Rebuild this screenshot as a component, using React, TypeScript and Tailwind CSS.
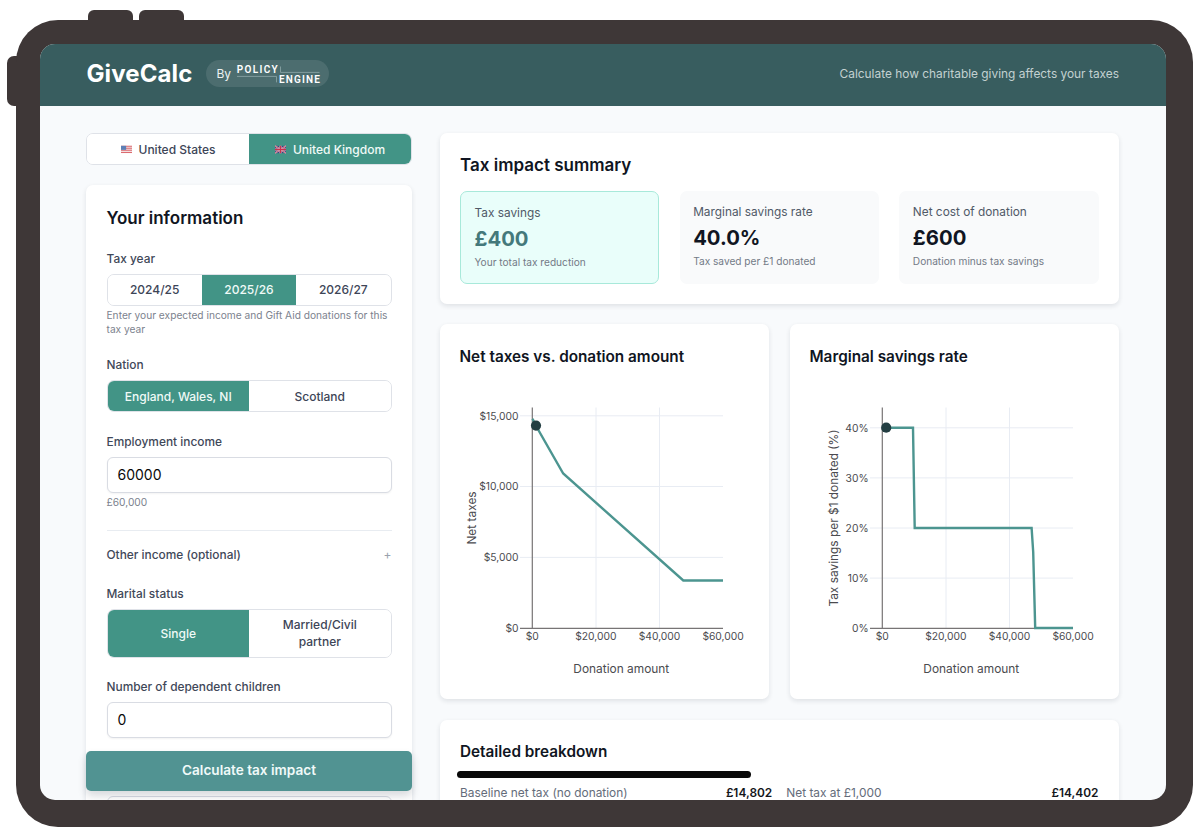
import { ReactNode } from 'react';
import clsx from 'clsx';

const X_TICKS = ['$0', '$20,000', '$40,000', '$60,000'];

type Tick = { label: string; y: number };

const TAX_TICKS: Tick[] = [
  { label: '$15,000', y: 35.8 },
  { label: '$10,000', y: 106.5 },
  { label: '$5,000', y: 177.4 },
  { label: '$0', y: 248.3 },
];

const RATE_TICKS: Tick[] = [
  { label: '40%', y: 47.8 },
  { label: '30%', y: 97.9 },
  { label: '20%', y: 148 },
  { label: '10%', y: 198.1 },
  { label: '0%', y: 248.3 },
];

function UsFlag() {
  return (
    <svg width="11" height="9" viewBox="0 0 12 9">
      <rect y="0.5" width="12" height="8" fill="#f3dfe0" />
      <path d="M0 1h12M0 3.2h12M0 5.4h12M0 7.8h12" stroke="#dc6b70" strokeWidth="1.1" />
      <rect y="0.5" width="5.6" height="4.4" fill="#5c7fb5" />
    </svg>
  );
}

function UkFlag() {
  return (
    <svg width="11" height="9" viewBox="0 0 12 9">
      <rect y="0.5" width="12" height="8" fill="#35477d" />
      <path d="M0 .5l12 8M12 .5l-12 8" stroke="#dcc3cf" strokeWidth="1.5" />
      <path d="M0 .5l12 8M12 .5l-12 8" stroke="#c9405a" strokeWidth="0.8" />
      <path d="M6 .5v8M0 4.5h12" stroke="#ecd3db" strokeWidth="2.2" />
      <path d="M6 .5v8M0 4.5h12" stroke="#c9304c" strokeWidth="1.5" />
    </svg>
  );
}

function PolicyEngineLogo() {
  return (
    <svg width="85" height="20" viewBox="0 0 85 20" fill="#fff" className="font-['Roboto',sans-serif]">
      <text x="0.7" y="9.1" fontSize="10" fontWeight="600" textLength="41" lengthAdjust="spacing">POLICY</text>
      <text x="43" y="18.8" fontSize="10" fontWeight="600" textLength="41" lengthAdjust="spacing">ENGINE</text>
      <path d="M44.5 2.5v5.9h39M1 12.4h39.5v6" fill="none" stroke="#8fa9ab" strokeWidth="0.8" />
    </svg>
  );
}

type Option = { label: string; active?: boolean; icon?: ReactNode };

function Segmented({ options, className }: { options: Option[]; className?: string }) {
  return (
    <div className={clsx('flex overflow-hidden rounded-[7px] border border-[#dfe2e8] bg-white', className)}>
      {options.map((o, i) => (
        <button
          key={o.label}
          className={clsx(
            'flex flex-1 basis-0 items-center justify-center gap-[7px] px-[16px] text-[12px] leading-[17px] font-medium',
            o.active ? 'bg-[#429486] text-[#f0faf7]' : 'bg-white text-[#3d4557]',
            i > 0 && !o.active && !options[i - 1].active && 'border-l border-[#dfe2e8]'
          )}
        >
          {o.icon}
          {o.label}
        </button>
      ))}
    </div>
  );
}

function Label({ children, className }: { children: ReactNode; className?: string }) {
  return <p className={clsx('text-[11.9px] leading-[17px] font-medium text-[#3f4859]', className)}>{children}</p>;
}

function Field({ value }: { value: string }) {
  return (
    <div className="mt-[6.5px] flex h-[36px] items-center rounded-[6px] border border-[#d9dce3] bg-white px-[10px] text-[14px] text-[#0a0a0a] shadow-xs">
      {value}
    </div>
  );
}

function Card({ children, className }: { children?: ReactNode; className?: string }) {
  return (
    <div className={clsx('rounded-[7px] bg-white shadow-[0_2px_5px_rgba(15,23,42,0.11)]', className)}>{children}</div>
  );
}

function Stat({ label, value, note, highlight }: { label: string; value: string; note: string; highlight?: boolean }) {
  return (
    <div
      className={clsx(
        'h-[93px] rounded-[7px] px-[13.5px] pt-[13px]',
        highlight ? 'border border-[#a8e9da] bg-[#e9fefa]' : 'bg-[#f9fafb]'
      )}
    >
      <p className="text-[11.85px] leading-[17px] text-[#505967]">{label}</p>
      <p className={clsx('mt-[3px] text-[20.3px] leading-[28px] font-bold', highlight ? 'text-[#44797b]' : 'text-[#101522]')}>
        {value}
      </p>
      <p className="mt-[2px] text-[10.15px] leading-[14px] text-[#747b87]">{note}</p>
    </div>
  );
}

type ChartProps = {
  title: string;
  yLabel: string;
  yLabelX: number;
  ticks: Tick[];
  points: string;
  marker: [number, number];
};

function ChartCard({ title, yLabel, yLabelX, ticks, points, marker }: ChartProps) {
  return (
    <Card className="h-[375px] flex-1">
      <h3 className="px-[20px] pt-[22px] text-[15.3px] leading-[21px] font-semibold text-[#101522]">{title}</h3>
      <svg width="329" height="319" viewBox="0 0 329 319" className="mt-[13px]">
        {X_TICKS.slice(1, 3).map((t, i) => (
          <path key={t} d={`M${156 + i * 63.5} 27.5V248`} stroke="#e8ecf3" />
        ))}
        {ticks.slice(0, -1).map((t) => (
          <path key={t.label} d={`M80 ${t.y}H283`} stroke="#e8ecf3" />
        ))}
        <path d="M92.3 27.5V248.3M80 248.3H283" stroke="#777475" strokeWidth="1.2" />
        <polyline points={points} fill="none" stroke="#4c9590" strokeWidth="2.4" />
        <circle cx={marker[0]} cy={marker[1]} r="5.1" fill="#233e42" />
        <g fill="#4b4b4f" fontSize="10.3">
          {ticks.map((t) => (
            <text key={t.label} x="78.5" y={t.y + 3.7} textAnchor="end">{t.label}</text>
          ))}
          {X_TICKS.map((t, i) => (
            <text key={t} x={92.3 + i * 63.6} y="259.5" textAnchor="middle">{t}</text>
          ))}
        </g>
        <g fill="#4b4b4f" fontSize="11.9" textAnchor="middle">
          <text x="181.3" y="292.5">Donation amount</text>
          <text transform={`translate(${yLabelX} 138) rotate(-90)`}>{yLabel}</text>
        </g>
      </svg>
    </Card>
  );
}

export default function App() {
  return (
    <div className="relative h-[840px] w-[1200px] overflow-hidden bg-white pt-[20px] pl-[16px] font-['Inter',sans-serif]">
      {/* Tablet buttons */}
      <div className="absolute top-[10px] left-[88px] h-[20px] w-[45px] rounded-[6px] bg-[#3e3737]" />
      <div className="absolute top-[10px] left-[139px] h-[20px] w-[45px] rounded-[6px] bg-[#3e3737]" />
      <div className="absolute top-[56px] left-[7px] h-[50px] w-[20px] rounded-[7px] bg-[#3e3737]" />

      {/* Tablet body */}
      <div className="relative h-[807px] w-[1177px] rounded-[42px] bg-[#3e3737] pt-[24px] pl-[24px]">
        <div className="h-[756px] w-[1126px] overflow-hidden rounded-[15px] bg-[#f8fafc]">
          <header className="flex h-[61.5px] items-center justify-between bg-[#385d5f] pr-[47px] pb-[2px] pl-[46.5px]">
            <div className="flex items-center gap-[14px]">
              <h1 className="text-[24px] leading-[30px] font-bold tracking-[0.1px] text-white">GiveCalc</h1>
              <div className="flex h-[27px] w-[123px] items-center gap-[5px] rounded-full bg-[#4c6d6f] pl-[10px] text-[12px] text-[#edf2f2]">
                <span>By</span>
                <PolicyEngineLogo />
              </div>
            </div>
            <p className="text-[11.9px] text-[#c3d1d1]">Calculate how charitable giving affects your taxes</p>
          </header>

          <main className="flex gap-[27.5px] pt-[27.5px] pr-[47px] pl-[46px]">
            {/* Form */}
            <aside className="relative w-[326px] shrink-0">
              <Segmented
                className="h-[32px]"
                options={[
                  { label: 'United States', icon: <UsFlag /> },
                  { label: 'United Kingdom', icon: <UkFlag />, active: true },
                ]}
              />
              <Card className="mt-[20px] h-[660px] px-[20.5px] pt-[21px]">
                <h2 className="text-[17px] leading-[24px] font-semibold text-[#101522]">Your information</h2>
                <Label className="mt-[19.5px]">Tax year</Label>
                <Segmented
                  className="mt-[7px] h-[32px]"
                  options={[{ label: '2024/25' }, { label: '2025/26', active: true }, { label: '2026/27' }]}
                />
                <p className="mt-[2.5px] text-[10.2px] leading-[14px] text-[#7c828e]">
                  Enter your expected income and Gift Aid donations for this tax year
                </p>
                <Label className="mt-[20px]">Nation</Label>
                <Segmented
                  className="mt-[7px] h-[32px]"
                  options={[{ label: 'England, Wales, NI', active: true }, { label: 'Scotland' }]}
                />
                <Label className="mt-[21px]">Employment income</Label>
                <Field value="60000" />
                <p className="mt-[2.5px] text-[10.2px] leading-[14px] text-[#7c828e]">£60,000</p>
                <div className="mt-[20.5px] flex items-center justify-between border-t border-[#e8ecf1] pt-[15.5px]">
                  <Label>Other income (optional)</Label>
                  <span className="text-[12px] leading-[17px] text-[#9aa1ad]">+</span>
                </div>
                <Label className="mt-[21.5px]">Marital status</Label>
                <Segmented
                  className="mt-[7px] h-[49px]"
                  options={[{ label: 'Single', active: true }, { label: 'Married/Civil partner' }]}
                />
                <Label className="mt-[20.5px]">Number of dependent children</Label>
                <Field value="0" />
                <div className="mt-[58px] h-[37px] rounded-[6px] border border-[#d9dce3]" />
              </Card>
              <button className="absolute top-[617.5px] left-0 h-[40.5px] w-[326px] rounded-[5px] bg-[#519392] pb-px text-[13.6px] font-semibold text-[#f0faf9] shadow-[0_5px_9px_rgba(15,23,42,0.16)]">
                Calculate tax impact
              </button>
            </aside>

            {/* Results */}
            <section className="flex min-w-0 flex-1 flex-col gap-[20px]">
              <Card className="h-[171px] shrink-0 px-[20.5px] pt-[20px]">
                <h2 className="text-[17px] leading-[24px] font-semibold text-[#101522]">Tax impact summary</h2>
                <div className="mt-[13.5px] grid grid-cols-3 gap-[20.5px]">
                  <Stat label="Tax savings" value="£400" note="Your total tax reduction" highlight />
                  <Stat label="Marginal savings rate" value="40.0%" note="Tax saved per £1 donated" />
                  <Stat label="Net cost of donation" value="£600" note="Donation minus tax savings" />
                </div>
              </Card>

              <div className="-mt-[0.5px] flex gap-[20.5px]">
                <ChartCard
                  title="Net taxes vs. donation amount"
                  yLabel="Net taxes"
                  yLabelX={35.5}
                  ticks={TAX_TICKS}
                  points="92.5,38.7 95.8,45.5 123.2,93.5 243.3,200.5 283,200.5"
                  marker={[96, 45.6]}
                />
                <ChartCard
                  title="Marginal savings rate"
                  yLabel="Tax savings per $1 donated (%)"
                  yLabelX={48}
                  ticks={RATE_TICKS}
                  points="92.5,47.8 123,47.8 124.7,148 241.6,148 243.2,172 245.2,248 283,248"
                  marker={[96.2, 47.7]}
                />
              </div>

              <Card className="mt-[1px] h-[160px] shrink-0 px-[20.5px] pt-[21.5px]">
                <h3 className="text-[15.3px] leading-[21px] font-semibold text-[#101522]">Detailed breakdown</h3>
                <div className="mt-[9px] -ml-[3.5px] h-[7px] w-[294px] rounded-full bg-[#080808]" />
                <div className="mt-[6px] flex gap-[14px] text-[11.9px] leading-[17px]">
                  <div className="flex flex-1 justify-between">
                    <span className="text-[#646c7a]">Baseline net tax (no donation)</span>
                    <span className="font-semibold text-[#14161b]">£14,802</span>
                  </div>
                  <div className="flex flex-1 justify-between">
                    <span className="text-[#646c7a]">Net tax at £1,000</span>
                    <span className="font-semibold text-[#14161b]">£14,402</span>
                  </div>
                </div>
              </Card>
            </section>
          </main>
        </div>
      </div>
    </div>
  );
}
